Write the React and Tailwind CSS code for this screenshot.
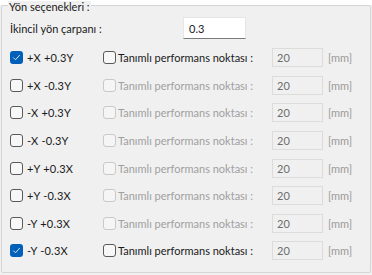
import React from 'react';

const rows = [
  { label: '+X +0.3Y', checked: true, enabled: true },
  { label: '+X -0.3Y', checked: false, enabled: false },
  { label: '-X +0.3Y', checked: false, enabled: false },
  { label: '-X -0.3Y', checked: false, enabled: false },
  { label: '+Y +0.3X', checked: false, enabled: false },
  { label: '+Y -0.3X', checked: false, enabled: false },
  { label: '-Y +0.3X', checked: false, enabled: false },
  { label: '-Y -0.3X', checked: true, enabled: true },
];

const CheckBox = ({ checked, disabled }) => {
  if (checked) {
    return (
      <span className="flex h-[13px] w-[13px] shrink-0 items-center justify-center rounded-[3px] bg-[#005fb8]">
        <svg width="9" height="9" viewBox="0 0 9 9" fill="none">
          <path d="M1.5 4.8l2 2 4-4.5" stroke="#cfe3f7" strokeWidth="1" strokeLinecap="round" strokeLinejoin="round" />
        </svg>
      </span>
    );
  }
  return (
    <span
      className={
        disabled
          ? 'block h-[13px] w-[13px] shrink-0 rounded-[3px] border border-[#c9c9c9] bg-[#f5f5f5]'
          : 'block h-[13px] w-[13px] shrink-0 rounded-[3px] border border-[#5a5a5a] bg-[#f7f7f7]'
      }
    />
  );
};

const Row = ({ row }) => (
  <div className="flex h-[27.6px] items-center whitespace-nowrap">
    <div className="flex w-[93px] items-center">
      <CheckBox checked={row.checked} />
      <span className="ml-[4px] tracking-[0.2px] text-[#1a1a1a]">{row.label}</span>
    </div>
    <div className="flex w-[169px] items-center">
      <CheckBox disabled={!row.enabled} />
      <span className={row.enabled ? 'ml-[2px] text-[#1a1a1a]' : 'ml-[2px] text-[#a0a0a0]'}>
        Tanımlı performans noktası :
      </span>
    </div>
    <div className="flex h-[19px] w-[51px] items-center border border-[#dcdcdc] bg-[#f0f0f0] pl-[4px] text-[#6d6d6d]">
      20
    </div>
    <span className="ml-[5px] text-[#9a9a9a]">[mm]</span>
  </div>
);

export default function App() {
  return (
    <div
      className="h-[275px] w-[372px] bg-[#f0f0f0] text-[11px] leading-none"
      style={{ fontFamily: 'Lato, "Noto Sans", sans-serif' }}
    >
      <div className="relative ml-[1px] mt-[5px] h-[268px] w-[370px] rounded-[2px] border border-[#d5d5d5]">
        <span className="absolute left-[6px] top-[-5px] bg-[#f0f0f0] px-[1px] text-[#1a1a1a]">Yön seçenekleri :</span>
        <div className="flex flex-col pl-[8px] pt-[10px]">
          <div className="flex h-[24px] items-center">
            <span className="w-[173px] text-[#1a1a1a]">İkincil yön çarpanı :</span>
            <div className="flex h-[22px] w-[63px] items-center border border-[#e6e6e6] border-b-[#7a7a7a] bg-white pl-[5px] text-[#1a1a1a]">
              0.3
            </div>
          </div>
          <div className="mt-[4px] flex flex-col">
            {rows.map((r) => (
              <Row key={r.label} row={r} />
            ))}
          </div>
        </div>
      </div>
    </div>
  );
}
